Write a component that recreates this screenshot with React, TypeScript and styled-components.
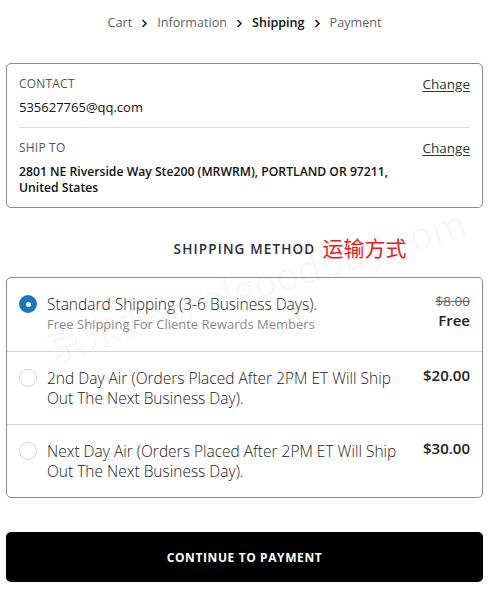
import React from "react";
import styled, { createGlobalStyle } from "styled-components";

const Global = createGlobalStyle`
  html, body { margin: 0; padding: 0; background: #fff; }
  body {
    font-family: "Open Sans", "Noto Sans", Arial, sans-serif;
    color: #222;
    -webkit-font-smoothing: antialiased;
  }
  * { box-sizing: border-box; }
`;

const Page = styled.div`
  position: relative;
  width: 489px;
  padding: 15px 6px 0;
  overflow: hidden;
`;

const Crumbs = styled.nav`
  display: flex;
  justify-content: center;
  align-items: center;
  gap: 9px;
  height: 16px;
  font-size: 12.6px;
  line-height: 16px;
`;

const Crumb = styled.span<{ $active?: boolean }>`
  color: ${(p) => (p.$active ? "#111" : "#5f6368")};
  font-weight: ${(p) => (p.$active ? 600 : 400)};
`;

const Chevron = () => (
  <svg width="7" height="9" viewBox="0 0 7 9" fill="none">
    <path d="M1.5 1 L5 4.5 L1.5 8" stroke="#222" strokeWidth="1.6" />
  </svg>
);

const Card = styled.section`
  margin-top: 32px;
  border: 1px solid #8a8a8a;
  border-radius: 5px;
  padding: 0 12px;
`;

const InfoBlock = styled.div<{ $last?: boolean }>`
  padding: 12px 0 ${(p) => (p.$last ? "11px" : "12px")};
  border-bottom: ${(p) => (p.$last ? "none" : "1px solid #dcdcdc")};
`;

const InfoHead = styled.div`
  display: flex;
  justify-content: space-between;
  align-items: center;
  line-height: 16px;
`;

const Label = styled.span`
  font-size: 12px;
  color: #555;
  text-transform: uppercase;
  letter-spacing: 0.2px;
`;

const ChangeLink = styled.a`
  font-size: 13.5px;
  color: #333;
  text-decoration: underline;
  text-underline-offset: 2px;
`;

const InfoValue = styled.div<{ $gap: number }>`
  margin-top: ${(p) => p.$gap}px;
  font-size: 12.2px;
  line-height: 16px;
  font-weight: 600;
  color: #111;
`;

const Email = styled(InfoValue)`
  font-size: 13px;
  font-weight: 500;
`;

const Heading = styled.h2`
  position: relative;
  margin: 31px 0 0;
  display: flex;
  justify-content: center;
  line-height: 20px;
  height: 20px;
  font-weight: 600;
`;

const HeadingText = styled.span`
  position: relative;
  font-size: 13.5px;
  letter-spacing: 1.15px;
  color: #2b2b33;
  text-transform: uppercase;
`;

const HeadingCn = styled.span`
  position: absolute;
  left: calc(100% + 7px);
  top: -5px;
  white-space: nowrap;
  font-family: "Noto Sans CJK SC", sans-serif;
  font-size: 21px;
  line-height: 26px;
  font-weight: 400;
  letter-spacing: 0;
  color: #f01818;
`;

const Methods = styled.div`
  margin-top: 18px;
  border: 1px solid #8a8a8a;
  border-radius: 5px;
`;

const Method = styled.label<{ $first?: boolean }>`
  display: flex;
  align-items: flex-start;
  gap: 10px;
  padding: 16px 12px;
  border-top: ${(p) => (p.$first ? "none" : "1px solid #d6d6d6")};
  min-height: ${(p) => (p.$first ? "73px" : "auto")};
`;

const Radio = styled.span<{ $checked?: boolean }>`
  flex: none;
  width: 18px;
  height: 18px;
  margin-top: 1px;
  border-radius: 50%;
  border: ${(p) => (p.$checked ? "none" : "1px solid #d4d4d4")};
  background: ${(p) => (p.$checked ? "#1a77c0" : "#fff")};
  display: flex;
  align-items: center;
  justify-content: center;
  &::after {
    content: "";
    display: ${(p) => (p.$checked ? "block" : "none")};
    width: 5px;
    height: 5px;
    border-radius: 50%;
    background: #fff;
  }
`;

const MethodBody = styled.div`
  flex: 1;
  min-width: 0;
`;

const MethodTitle = styled.div`
  font-size: 15.5px;
  line-height: 20px;
  font-weight: 300;
  color: #222;
  padding-right: 8px;
`;

const MethodNote = styled.div`
  margin-top: 1px;
  font-size: 13px;
  line-height: 18px;
  font-weight: 400;
  color: #8a8a8a;
`;

const Price = styled.div`
  flex: none;
  display: flex;
  flex-direction: column;
  align-items: flex-end;
  font-size: 15px;
  line-height: 19px;
  font-weight: 600;
  color: #222;
  margin-top: -2px;
`;

const OldPrice = styled.s`
  font-size: 13.5px;
  font-weight: 400;
  color: #666;
`;

const Button = styled.button`
  display: block;
  width: 100%;
  height: 50px;
  margin-top: 34px;
  border: none;
  border-radius: 5px;
  background: #000;
  color: #fff;
  font-family: inherit;
  font-size: 12px;
  font-weight: 700;
  letter-spacing: 0.6px;
  text-transform: uppercase;
  cursor: pointer;
`;

const Watermark = styled.div`
  position: absolute;
  left: 55px;
  top: 318px;
  transform: rotate(-17deg);
  transform-origin: left bottom;
  font-size: 38px;
  font-family: "Noto Sans CJK SC", sans-serif;
  color: rgba(0, 0, 0, 0.03);
  white-space: nowrap;
  pointer-events: none;
`;

const methods = [
  {
    title: "Standard Shipping (3-6 Business Days).",
    note: "Free Shipping For Cliente Rewards Members",
    old: "$8.00",
    price: "Free",
    checked: true,
  },
  {
    title: "2nd Day Air (Orders Placed After 2PM ET Will Ship Out The Next Business Day).",
    price: "$20.00",
  },
  {
    title: "Next Day Air (Orders Placed After 2PM ET Will Ship Out The Next Business Day).",
    price: "$30.00",
  },
];

export default function App() {
  return (
    <Page>
      <Global />
      <Crumbs>
        <Crumb>Cart</Crumb>
        <Chevron />
        <Crumb>Information</Crumb>
        <Chevron />
        <Crumb $active>Shipping</Crumb>
        <Chevron />
        <Crumb>Payment</Crumb>
      </Crumbs>

      <Card>
        <InfoBlock>
          <InfoHead>
            <Label>Contact</Label>
            <ChangeLink>Change</ChangeLink>
          </InfoHead>
          <Email $gap={7}>535627765@qq.com</Email>
        </InfoBlock>
        <InfoBlock $last>
          <InfoHead>
            <Label>Ship to</Label>
            <ChangeLink>Change</ChangeLink>
          </InfoHead>
          <InfoValue $gap={8}>
            2801 NE Riverside Way Ste200 (MRWRM), PORTLAND OR 97211,
            <br />
            United States
          </InfoValue>
        </InfoBlock>
      </Card>

      <Heading>
        <HeadingText>
          Shipping Method
          <HeadingCn>运输方式</HeadingCn>
        </HeadingText>
      </Heading>

      <Methods>
        {methods.map((m, i) => (
          <Method key={i} $first={i === 0}>
            <Radio $checked={m.checked} />
            <MethodBody>
              <MethodTitle>{m.title}</MethodTitle>
              {m.note && <MethodNote>{m.note}</MethodNote>}
            </MethodBody>
            <Price>
              {m.old && <OldPrice>{m.old}</OldPrice>}
              <span>{m.price}</span>
            </Price>
          </Method>
        ))}
      </Methods>

      <Button>Continue to payment</Button>
      <Watermark>京东好物 olgoodbuy.com</Watermark>
    </Page>
  );
}
